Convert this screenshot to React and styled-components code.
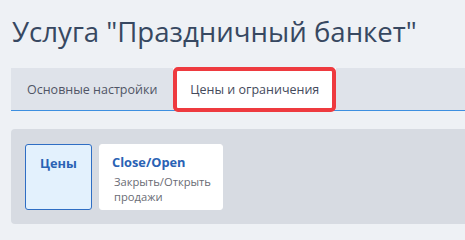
import React from "react";
import styled, { createGlobalStyle } from "styled-components";

const GlobalStyle = createGlobalStyle`
  html, body {
    margin: 0;
    padding: 0;
    background: #eef1f5;
    font-family: "Open Sans", "Noto Sans", sans-serif;
  }
`;

const Page = styled.div`
  width: 465px;
  height: 240px;
  overflow: hidden;
  padding-left: 11px;
  box-sizing: border-box;
`;

const Title = styled.h1`
  margin: 0;
  padding: 12px 0 0 1px;
  font-size: 27.6px;
  line-height: 38px;
  font-weight: 400;
  color: #374861;
  white-space: nowrap;
`;

const TabBar = styled.div`
  display: flex;
  margin-top: 18px;
  height: 42px;
  background: #dfe3ea;
  border-bottom: 1px solid #3d8fe0;
`;

const Tab = styled.div`
  position: relative;
  display: flex;
  align-items: center;
  padding: 0 ${(p) => (p.$active ? "17px" : "16px")};
  font-size: 12.5px;
  color: ${(p) => (p.$active ? "#444a5c" : "#505566")};
  background: ${(p) => (p.$active ? "#fff" : "transparent")};
  white-space: nowrap;

  ${(p) =>
    p.$active &&
    `
    &::after {
      content: "";
      position: absolute;
      top: -1px;
      bottom: -2px;
      left: 0;
      right: 0;
      border: 4px solid #ee3a3f;
      border-radius: 5px;
    }
  `}
`;

const Panel = styled.div`
  display: flex;
  gap: 7px;
  margin-top: 18px;
  padding: 15px 14px 14px;
  height: 95px;
  box-sizing: border-box;
  background: #d7dbe2;
  border-radius: 4px 0 0 4px;
`;

const Card = styled.div`
  width: ${(p) => p.$w}px;
  height: 66px;
  box-sizing: border-box;
  border-radius: 3px;
  border: 1px solid ${(p) => (p.$selected ? "#2f6ec4" : "#fff")};
  background: ${(p) => (p.$selected ? "#e3f1fd" : "#fff")};
  padding: ${(p) => (p.$selected ? "9px 0 0" : "8px 4px 0 12px")};
  text-align: ${(p) => (p.$selected ? "center" : "left")};
`;

const CardTitle = styled.div`
  font-size: 12.8px;
  line-height: 18px;
  font-weight: 700;
  color: #2a62b4;
`;

const CardNote = styled.div`
  margin: 3px 0 0 2px;
  font-size: 11.2px;
  line-height: 15px;
  color: #6a6c74;
  white-space: nowrap;
`;

export default function App() {
  return (
    <Page>
      <GlobalStyle />
      <Title>Услуга "Праздничный банкет"</Title>
      <TabBar>
        <Tab>Основные настройки</Tab>
        <Tab $active>Цены и ограничения</Tab>
      </TabBar>
      <Panel>
        <Card $w={67} $selected>
          <CardTitle>Цены</CardTitle>
        </Card>
        <Card $w={124}>
          <CardTitle>Close/Open</CardTitle>
          <CardNote>
            Закрыть/Открыть
            <br />
            продажи
          </CardNote>
        </Card>
      </Panel>
    </Page>
  );
}
